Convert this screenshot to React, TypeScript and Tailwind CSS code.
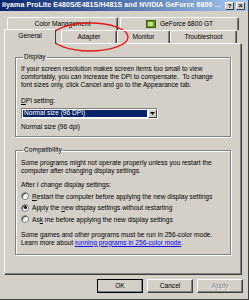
const font = "font-['Liberation_Sans',Arial,sans-serif]"

function Radio({ checked, label }: { checked?: boolean; label: React.ReactNode }) {
  return (
    <div className="flex items-center h-[11.5px] gap-[3px]">
      <span className="w-[8px] h-[8px] rounded-full bg-white border border-[#808080] shadow-[inset_1px_1px_0_#404040] flex items-center justify-center">
        {checked && <span className="w-[3px] h-[3px] rounded-full bg-black"></span>}
      </span>
      <span>{label}</span>
    </div>
  )
}

function Tab({ label, w, icon }: { label: string; w: string; icon?: boolean }) {
  return (
    <div
      className={`${w} h-[13px] flex items-center justify-center gap-[4px] border-t border-l border-white border-r border-r-[#404040] rounded-t-[2px] shadow-[inset_-1px_0_0_#808080]`}
    >
      {icon && (
        <span className="w-[10px] h-[8px] bg-[#6a9a1f] border border-[#3c5a10] flex items-center justify-center">
          <span className="w-[5px] h-[4px] bg-[#c8e08a] rounded-[1px]"></span>
        </span>
      )}
      <span>{label}</span>
    </div>
  )
}

function Button({ label, def, disabled }: { label: string; def?: boolean; disabled?: boolean }) {
  return (
    <div
      className={`w-[46px] h-[14px] flex items-center justify-center bg-[#d4d0c8] border ${
        def ? "border-black" : "border-t-white border-l-white border-r-[#404040] border-b-[#404040]"
      } shadow-[inset_-1px_-1px_0_#808080] ${disabled ? "text-[#808080] [text-shadow:1px_1px_0_#fff]" : "text-black"}`}
    >
      {label}
    </div>
  )
}

export default function App() {
  return (
    <div className={`${font} relative w-[249px] h-[300px] bg-[#d4d0c8] text-[6.6px] text-black border-r border-b border-[#404040] overflow-hidden`}>
      {/* title bar */}
      <div className="h-[11px] flex items-center justify-between bg-gradient-to-r from-[#0a246a] to-[#a6caf0] pl-[2px] pr-[3px]">
        <span className="text-white font-bold text-[7px] whitespace-nowrap tracking-[0.1px]">
          iiyama ProLite E480S/E481S/H481S and NVIDIA GeForce 6800 ...
        </span>
        <div className="flex gap-[2px]">
          <span className="w-[9px] h-[8px] bg-[#d4d0c8] border border-t-white border-l-white border-r-[#404040] border-b-[#404040] text-[6px] font-bold flex items-center justify-center leading-none">?</span>
          <span className="w-[9px] h-[8px] bg-[#d4d0c8] border border-t-white border-l-white border-r-[#404040] border-b-[#404040] text-[7px] font-bold flex items-center justify-center leading-none">×</span>
        </div>
      </div>

      {/* tabs */}
      <div className="pt-[6px]">
        <div className="flex gap-[2px] ml-[7px]">
          <Tab label="Color Management" w="w-[111px]" />
          <Tab label="GeForce 6800 GT" w="w-[119px]" icon />
        </div>
        <div className="flex items-end ml-[4px] relative z-10 -mb-[1px]">
          <div className="w-[52px] h-[15px] -mt-[2px] bg-[#d4d0c8] flex items-center justify-center border-t border-l border-white border-r border-r-[#404040] rounded-t-[2px] pb-[2px]">
            General
          </div>
          <div className="flex gap-0 ml-[5px] mb-[1px]">
            <Tab label="Adapter" w="w-[56px]" />
            <Tab label="Monitor" w="w-[53px]" />
            <Tab label="Troubleshoot" w="w-[67px]" />
          </div>
        </div>
      </div>

      {/* panel */}
      <div className="ml-[4px] w-[238px] h-[232px] border border-t-white border-l-white border-r-[#404040] border-b-[#404040] shadow-[inset_-1px_-1px_0_#808080] pt-[9px] px-[10px]">
        <fieldset className="border border-[#808080] shadow-[1px_1px_0_#fff,inset_1px_1px_0_#fff] px-[5px] pb-[5px] leading-[8px]">
          <legend className="px-[1px] ml-[2px] leading-[8px]">Display</legend>
          <p className="mt-[4px]">
            If your screen resolution makes screen items too small to view
            <br />
            comfortably, you can increase the DPI to compensate.&nbsp; To change
            <br />
            font sizes only, click Cancel and go to the Appearance tab.
          </p>
          <p className="mt-[8px]">
            <span className="underline">D</span>PI setting:
          </p>
          <div className="mt-[3px] w-[137px] h-[11px] flex bg-white border border-t-[#808080] border-l-[#808080] border-r-white border-b-white">
            <div className="flex-1 m-[1px] bg-[#0a246a] text-white flex items-center pl-[1px] leading-none">
              Normal size (96 DPI)
            </div>
            <div className="w-[9px] bg-[#d4d0c8] border border-t-white border-l-white border-r-[#404040] border-b-[#404040] flex items-center justify-center">
              <svg width="5" height="3" viewBox="0 0 5 3">
                <path d="M0 0h5L2.5 3z" fill="#000" />
              </svg>
            </div>
          </div>
          <p className="mt-[4px]">Normal size (96 dpi)</p>
        </fieldset>

        <fieldset className="mt-[9px] border border-[#808080] shadow-[1px_1px_0_#fff,inset_1px_1px_0_#fff] px-[5px] pb-[8px] leading-[7.5px]">
          <legend className="px-[1px] ml-[2px] leading-[8px]">Compatibility</legend>
          <p className="mt-[5px]">
            Some programs might not operate properly unless you restart the
            <br />
            computer after changing display settings.
          </p>
          <p className="mt-[7px]">After I change display settings:</p>
          <div className="mt-[2px]">
            <Radio
              label={
                <>
                  <span className="underline">R</span>estart the computer before applying the new display settings
                </>
              }
            />
            <Radio
              checked
              label={
                <>
                  Apply the <span className="underline">n</span>ew display settings without restarting
                </>
              }
            />
            <Radio
              label={
                <>
                  As<span className="underline">k</span> me before applying the new display settings
                </>
              }
            />
          </div>
          <p className="mt-[6px]">
            Some games and other programs must be run in 256-color mode.
            <br />
            Learn more about <span className="text-[#0000ff] underline">running programs in 256-color mode</span>.
          </p>
        </fieldset>
      </div>

      {/* buttons */}
      <div className="flex gap-[4px] ml-[97px] mt-[4px]">
        <Button label="OK" def />
        <Button label="Cancel" />
        <Button label="Apply" disabled />
      </div>

      {/* red annotation ellipse */}
      <svg className="absolute left-[50px] top-[21px] pointer-events-none" width="80" height="32" viewBox="0 0 80 32">
        <ellipse cx="40" cy="16" rx="38" ry="14" fill="none" stroke="#e21b1b" strokeWidth="1.4" />
      </svg>
    </div>
  )
}
